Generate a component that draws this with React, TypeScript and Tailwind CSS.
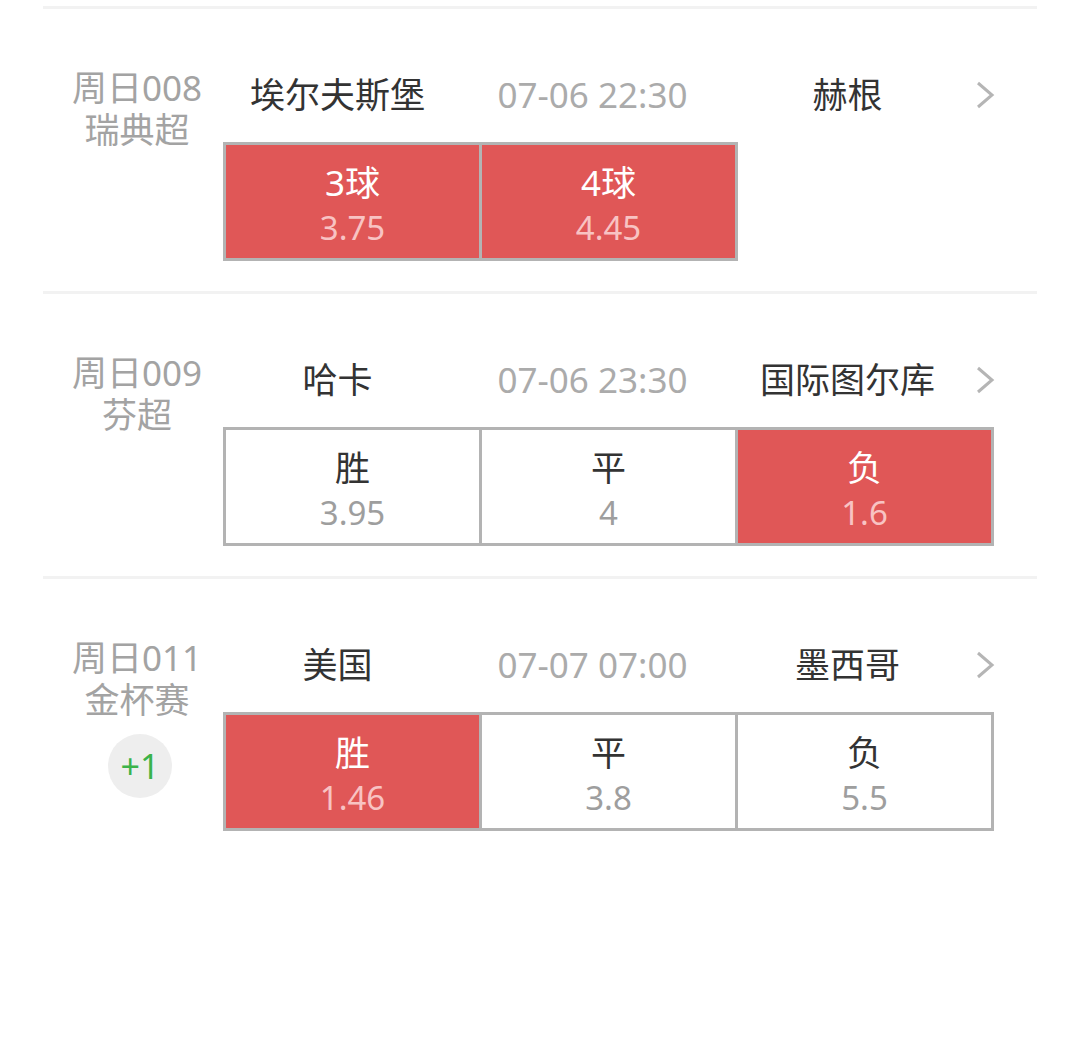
import React from 'react';

type Pick = { label: string; odds: string; active?: boolean };

type Match = {
  code: string;
  league: string;
  home: string;
  time: string;
  away: string;
  picks: Pick[];
  extra?: string;
};

const matches: Match[] = [
  {
    code: '周日008',
    league: '瑞典超',
    home: '埃尔夫斯堡',
    time: '07-06 22:30',
    away: '赫根',
    picks: [
      { label: '3球', odds: '3.75', active: true },
      { label: '4球', odds: '4.45', active: true },
    ],
  },
  {
    code: '周日009',
    league: '芬超',
    home: '哈卡',
    time: '07-06 23:30',
    away: '国际图尔库',
    picks: [
      { label: '胜', odds: '3.95' },
      { label: '平', odds: '4' },
      { label: '负', odds: '1.6', active: true },
    ],
  },
  {
    code: '周日011',
    league: '金杯赛',
    home: '美国',
    time: '07-07 07:00',
    away: '墨西哥',
    picks: [
      { label: '胜', odds: '1.46', active: true },
      { label: '平', odds: '3.8' },
      { label: '负', odds: '5.5' },
    ],
    extra: '+1',
  },
];

function Chevron() {
  return (
    <svg width="20" height="28" viewBox="0 0 20 28" className="shrink-0">
      <polyline points="3,2 17,14 3,26" fill="none" stroke="#b5b5b5" strokeWidth="3" strokeLinejoin="miter" />
    </svg>
  );
}

function MatchRow({ m }: { m: Match }) {
  return (
    <div className="flex h-[285px] border-t-[3px] border-[#f2f2f2]">
      {/* Left: code + league */}
      <div className="w-[186px] shrink-0 pl-[2px] pt-[58px] flex flex-col items-center -mr-[6px]">
        <div className="text-[35px] leading-[42px] text-[#a3a3a3] whitespace-nowrap">{m.code}</div>
        <div className="text-[35px] leading-[42px] text-[#a3a3a3] whitespace-nowrap">{m.league}</div>
        {m.extra && (
          <div className="mt-[13px] ml-[6px] w-[64px] h-[64px] rounded-full bg-[#eeeeee] flex items-center justify-center text-[34px] text-[#3bb34a]">
            {m.extra}
          </div>
        )}
      </div>

      {/* Right: teams + picks */}
      <div className="flex-1 pt-[62px]">
        <div className="flex items-center h-[48px] -ml-[13px]">
          <div className="w-[255px] text-center text-[35px] text-[#333333] whitespace-nowrap">{m.home}</div>
          <div className="w-[255px] text-center text-[35px] text-[#ababab] whitespace-nowrap">{m.time}</div>
          <div className="w-[255px] text-center text-[35px] text-[#333333] whitespace-nowrap">{m.away}</div>
          <Chevron />
        </div>

        <div className="flex mt-[23px]">
          {m.picks.map((p, i) => (
            <div
              key={i}
              className={`w-[259px] h-[119px] border-[3px] border-[#b3b3b3] flex flex-col items-center justify-center pt-[6px] ${
                i > 0 ? '-ml-[3px]' : ''
              } ${p.active ? 'bg-[#e05757]' : 'bg-white'}`}
            >
              <div className={`text-[35px] leading-[45px] ${p.active ? 'text-white' : 'text-[#333333]'}`}>{p.label}</div>
              <div className={`text-[33px] leading-[45px] ${p.active ? 'text-[#f8c3c3]' : 'text-[#9e9e9e]'}`}>{p.odds}</div>
            </div>
          ))}
        </div>
      </div>
    </div>
  );
}

export default function App() {
  return (
    <div
      className="w-[1080px] h-[1037px] bg-white px-[43px] pt-[6px] overflow-hidden"
      style={{ fontFamily: '"Noto Sans", "Noto Sans CJK SC", sans-serif' }}
    >
      {matches.map((m) => (
        <MatchRow key={m.code} m={m} />
      ))}
    </div>
  );
}
